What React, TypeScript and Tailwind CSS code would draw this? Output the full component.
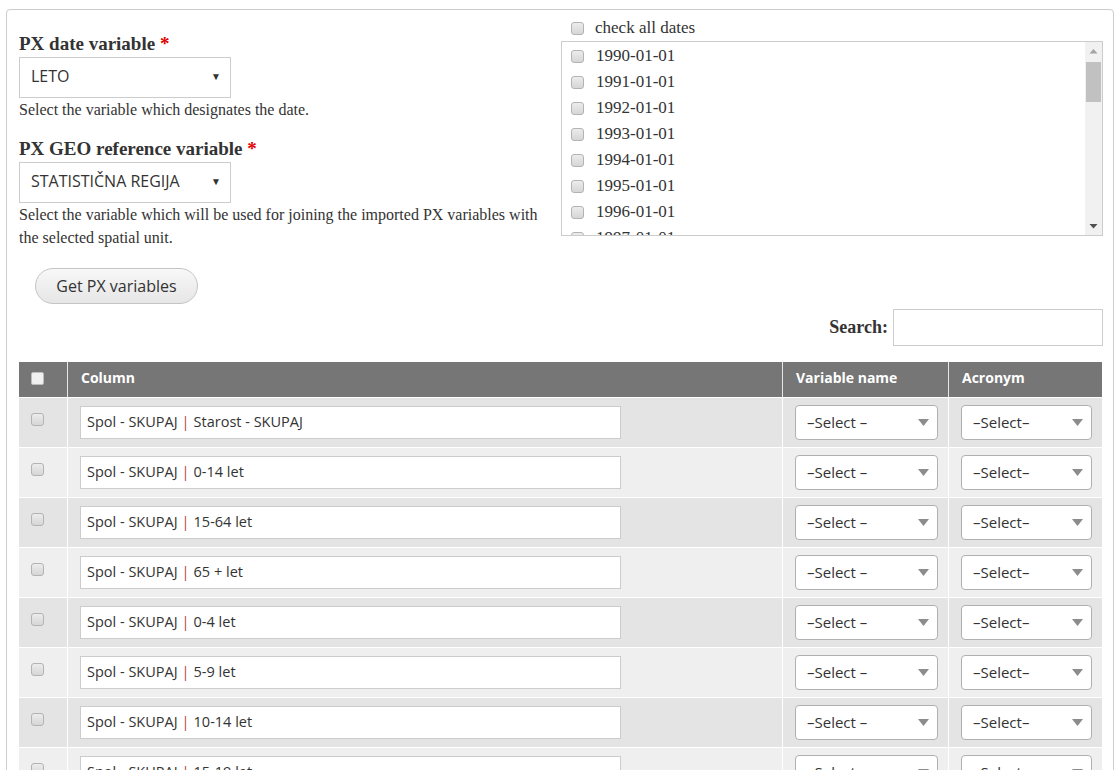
import React from "react";

const serif = "font-['Liberation_Serif',serif]";
const sans = "font-['Open_Sans',sans-serif]";

const dates = [
  "1990-01-01",
  "1991-01-01",
  "1992-01-01",
  "1993-01-01",
  "1994-01-01",
  "1995-01-01",
  "1996-01-01",
  "1997-01-01",
];

const rows = [
  "Starost - SKUPAJ",
  "0-14 let",
  "15-64 let",
  "65 + let",
  "0-4 let",
  "5-9 let",
  "10-14 let",
  "15-19 let",
];

function Check({ light = false }: { light?: boolean }) {
  return (
    <span
      className={
        light
          ? "block w-[13px] h-[13px] rounded-[2px] border border-[#bdbdbd] bg-[#f0f0f0]"
          : "block w-[13px] h-[13px] rounded-[3px] border border-[#b3b3b3] bg-gradient-to-b from-[#ececec] to-[#d6d6d6]"
      }
    />
  );
}

function TopSelect({ value }: { value: string }) {
  return (
    <div
      className={`flex items-center justify-between w-[212px] h-[41px] border border-[#cccccc] bg-white pl-[11px] pr-[9px] pb-[3px] text-[16px] text-[#333] ${sans}`}
    >
      <span>{value}</span>
      <span className="text-[10px] text-[#333]">▼</span>
    </div>
  );
}

function RowSelect({ label, width }: { label: string; width: string }) {
  return (
    <div
      className={`flex items-center justify-between ${width} h-[35px] rounded-[4px] border border-[#b0b0b0] bg-white pl-[11px] pr-[8px] text-[15px] text-[#333] ${sans}`}
    >
      <span>{label}</span>
      <svg width="11" height="7" viewBox="0 0 11 7">
        <path d="M0 0 H11 L5.5 7 Z" fill="#8c8c8c" />
      </svg>
    </div>
  );
}

export default function App() {
  return (
    <div className="w-[1120px] h-[770px] overflow-hidden bg-white">
      <div className="ml-[6px] mt-[9px] w-[1108px] h-[800px] border border-[#cccccc] rounded-[4px] pl-[12px] pr-[10px] pt-[10px]">
        <div className="flex">
          <div className={`w-[542px] pt-[13px] text-[#333] ${serif}`}>
            <div className="text-[19px] leading-[22px] font-bold">
              PX date variable <span className="text-[#e00000]">*</span>
            </div>
            <div className="mt-[2px]">
              <TopSelect value="LETO" />
            </div>
            <div className="text-[16px] leading-[22px] mt-[1px]">
              Select the variable which designates the date.
            </div>
            <div className="text-[19px] leading-[22px] font-bold mt-[17px]">
              PX GEO reference variable{" "}
              <span className="text-[#e00000]">*</span>
            </div>
            <div className="mt-[2px]">
              <TopSelect value="STATISTIČNA REGIJA" />
            </div>
            <div className="text-[16px] leading-[23px] w-[528px]">
              Select the variable which will be used for joining the imported
              PX variables with the selected spatial unit.
            </div>
          </div>
          <div className={`flex-1 text-[#333] ${serif}`}>
            <div className="flex items-center h-[16px] pl-[10px] gap-[11px] text-[17px]">
              <Check />
              <span>check all dates</span>
            </div>
            <div className="mt-[5px] h-[195px] border border-[#cccccc] flex">
              <div className="flex-1 overflow-hidden pt-[1px]">
                {dates.map((d) => (
                  <div
                    key={d}
                    className="flex items-center h-[26px] pl-[9px] gap-[12px] text-[17px]"
                  >
                    <Check />
                    <span>{d}</span>
                  </div>
                ))}
              </div>
              <div className="w-[17px] bg-[#f1f1f1] flex flex-col items-center">
                <svg width="9" height="17" viewBox="0 0 9 17" className="mt-[1px]">
                  <path d="M0.5 10.5 L4.5 6 L8.5 10.5 Z" fill="#a3a3a3" />
                </svg>
                <div className="w-[15px] h-[40px] bg-[#c1c1c1] mt-[2px]" />
                <div className="flex-1" />
                <svg width="9" height="17" viewBox="0 0 9 17">
                  <path d="M0.5 6 L8.5 6 L4.5 10.5 Z" fill="#505050" />
                </svg>
              </div>
            </div>
          </div>
        </div>

        <div className="mt-[19px] pl-[16px]">
          <button
            className={`w-[163px] h-[36px] rounded-[18px] border border-[#c4c4c4] bg-gradient-to-b from-[#f8f8f8] to-[#e6e6e6] text-[16px] text-[#333] ${sans}`}
          >
            Get PX variables
          </button>
        </div>

        <div className="flex justify-end items-center gap-[5px] mt-[5px]">
          <span className={`text-[18px] font-bold text-[#333] ${serif}`}>
            Search:
          </span>
          <div className="w-[210px] h-[37px] border border-[#cccccc] bg-white" />
        </div>

        <div className={`mt-[16px] w-[1083px] ${sans}`}>
          <div className="grid grid-cols-[48px_715px_166px_154px] h-[36px] bg-[#767676] text-white text-[14px] font-bold border-b border-white">
            <div className="flex items-center pl-[12px] pb-[3px]">
              <Check light />
            </div>
            <div className="flex items-center pl-[13px] pb-[5px] border-l border-[#e6e6e6]">
              Column
            </div>
            <div className="flex items-center pl-[13px] pb-[5px] border-l border-[#e6e6e6]">
              Variable name
            </div>
            <div className="flex items-center pl-[13px] pb-[5px] border-l border-[#e6e6e6]">
              Acronym
            </div>
          </div>
          {rows.map((r, i) => (
            <div
              key={r}
              className={`grid grid-cols-[48px_715px_166px_154px] h-[50px] border-b border-white ${
                i % 2 === 0 ? "bg-[#e4e4e4]" : "bg-[#efefef]"
              }`}
            >
              <div className="pl-[12px] pt-[15px]">
                <Check />
              </div>
              <div className="pl-[12px] pt-[8px] border-l border-white">
                <div className="w-[541px] h-[33px] border border-[#cccccc] bg-white flex items-center pl-[6px] pb-[2px] text-[14.5px] text-[#333]">
                  <span>Spol - SKUPAJ</span>
                  <span className="text-[#b8463f] mx-[4px]">|</span>
                  <span>{r}</span>
                </div>
              </div>
              <div className="pl-[12px] pt-[7px] border-l border-white">
                <RowSelect label="–Select –" width="w-[143px]" />
              </div>
              <div className="pl-[12px] pt-[7px] border-l border-white">
                <RowSelect label="–Select–" width="w-[131px]" />
              </div>
            </div>
          ))}
        </div>
      </div>
    </div>
  );
}
